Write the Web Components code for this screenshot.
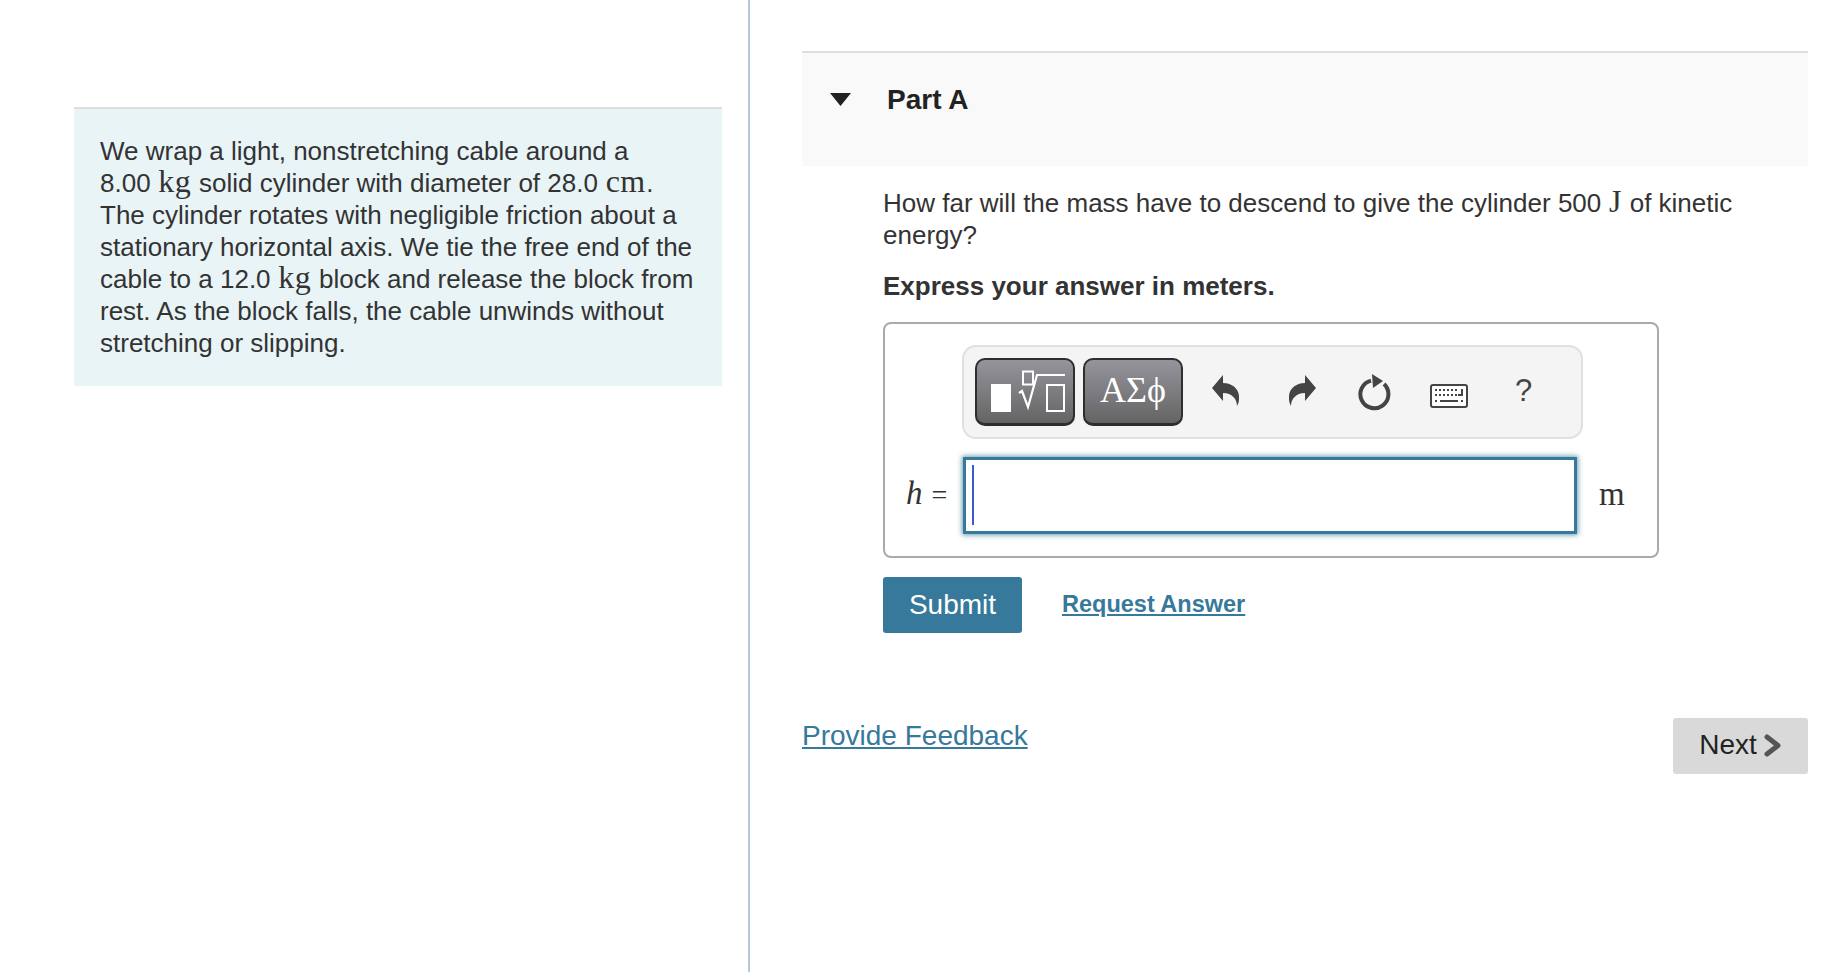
<!DOCTYPE html>
<html lang="en">
<head>
<meta charset="utf-8">
<title>Part A</title>
<style>
  html, body {
    margin: 0;
    height: 100%;
    background: #fff;
    color: #333;
    font-family: "Liberation Sans", Arial, sans-serif;
    font-size: 26px;
    line-height: 32px;
  }
</style>
</head>
<body>
<item-layout>
  <prompt-panel slot="left">
    We wrap a light, nonstretching cable around a<br>
    8.00 <math-text>kg</math-text> solid cylinder with diameter of 28.0 <math-text>cm</math-text>.<br>
    The cylinder rotates with negligible friction about a stationary horizontal axis. We tie the free end of the cable to a 12.0 <math-text>kg</math-text> block and release the block from rest. As the block falls, the cable unwinds without stretching or slipping.
  </prompt-panel>
  <part-header>Part A</part-header>
  <part-body>
    <p>How far will the mass have to descend to give the cylinder 500 <math-text>J</math-text> of kinetic energy?</p>
    <p class="hint"><b>Express your answer in meters.</b></p>
    <answer-box label="h" unit="m"></answer-box>
    <submit-row></submit-row>
  </part-body>
  <item-footer></item-footer>
</item-layout>

<script>
/**
 * Shorthand for a custom element whose shadow root is only a template string.
 *
 * @param {string} name - The tag name.
 * @param {string} html - Markup and styles for the shadow root.
 */
const simpleElement = (name, html) => {
  const template = document.createElement('template')
  template.innerHTML = html
  customElements.define(name, class extends HTMLElement {
    constructor () {
      super()
      this.attachShadow({ mode: 'open' })
        .appendChild(template.content.cloneNode(true))
    }
  })
}

simpleElement('item-layout', `
  <style>
    :host {
      display: grid;
      grid-template-columns: 750px 1fr;
      min-height: 100vh;
    }
    #left {
      border-right: 2px solid #b3c7dc;
      padding: 107px 26px 0 74px;
      box-sizing: border-box;
    }
    #right {
      padding: 51px 30px 0 52px;
      min-width: 0;
    }
  </style>
  <div id="left"><slot name="left"></slot></div>
  <div id="right"><slot></slot></div>
`)

simpleElement('prompt-panel', `
  <style>
    :host {
      display: block;
      background: #e9f4f7;
      border-top: 2px solid #dedede;
      padding: 26px 22px 27px 26px;
    }
  </style>
  <slot></slot>
`)

// no whitespace around the slot here, it would show up as a space after the unit
simpleElement('math-text', '<style>:host { display: inline; margin: 0 .5px; font-family: "Liberation Serif", "Times New Roman", serif; font-size: 32px; letter-spacing: .5px; line-height: 0; }</style><slot></slot>')

simpleElement('part-header', `
  <style>
    :host {
      display: flex;
      align-items: center;
      box-sizing: border-box;
      height: 115px;
      padding-bottom: 19px;
      background: #f9f9f9;
      border-top: 2px solid #dedede;
      color: #222;
      font-size: 28px;
      font-weight: bold;
    }
    svg {
      margin-left: 28px;
      margin-right: 36px;
      margin-top: -2px;
    }
  </style>
  <svg width="21" height="13" viewBox="0 0 21 13"><path d="M0 0H21L10.5 13Z" fill="#222"/></svg>
  <slot></slot>
`)

simpleElement('part-body', `
  <style>
    :host {
      display: block;
      padding: 21px 0 0 81px;
    }
    ::slotted(p) {
      margin: 0 60px 19px 0;
    }
    ::slotted(.hint) {
      margin-bottom: 20px;
    }
  </style>
  <slot></slot>
`)

simpleElement('math-toolbar', `
  <style>
    :host {
      display: flex;
      align-items: center;
      box-sizing: border-box;
      width: 621px;
      height: 94px;
      margin-left: 77px;
      padding: 0 0 0 11px;
      background: #f4f4f4;
      border: 2px solid #e0e0e0;
      border-radius: 14px;
    }
    .tmpl {
      display: flex;
      align-items: center;
      justify-content: center;
      box-sizing: border-box;
      width: 100px;
      height: 68px;
      margin-top: -1px;
      border: 2px solid #2e2e2e;
      border-bottom-width: 3px;
      border-radius: 10px;
      background: linear-gradient(#96949c, #646464);
      color: #fff;
      font-family: "Liberation Serif", serif;
      font-size: 36px;
      line-height: 1;
    }
    .tmpl + .tmpl { margin-left: 8px; padding-bottom: 3px; }
    .tool { display: block; flex: none; }
    .help {
      color: #444;
      font-size: 31px;
      line-height: 36px;
      margin-left: 47px;
      margin-top: -2px;
    }
  </style>
  <div class="tmpl">
    <svg width="96" height="63" viewBox="2 2 96 63" fill="none" stroke="#fff" stroke-width="2">
      <rect x="16" y="26" width="20" height="28" fill="#fff" stroke="none"/>
      <rect x="48" y="13.5" width="10" height="13"/>
      <path d="M44 35 47 33 53 49 62 17H90" stroke-width="2.2"/>
      <rect x="72" y="27" width="17" height="26"/>
    </svg>
  </div>
  <div class="tmpl">ΑΣϕ</div>
  <svg class="tool" style="margin-left:29px;margin-top:-4px" width="27" height="31" viewBox="0 0 27 31">
    <path d="M0 13 11 0V8C20 8 28 14 27 24 27 27 26 29 25 31 25 24 20 18 11 18V26Z" fill="#444"/>
  </svg>
  <svg class="tool" style="margin-left:50px;margin-top:-4px" width="27" height="31" viewBox="0 0 27 31">
    <path d="M27 13 16 0V8C7 8-1 14 0 24 0 27 1 29 2 31 2 24 7 18 16 18V26Z" fill="#444"/>
  </svg>
  <svg class="tool" style="margin-left:42px" width="33" height="37" viewBox="0 0 33 37">
    <path d="M13 6.6A14 14 0 1 0 26 10" fill="none" stroke="#444" stroke-width="4"/>
    <path d="M14 0 25 7 15 14Z" fill="#444"/>
  </svg>
  <svg class="tool" style="margin-left:39px;margin-top:8px" width="38" height="24" viewBox="0 0 38 24" fill="#444">
    <rect x="1" y="1" width="36" height="22" rx="2" fill="#fff" stroke="#444" stroke-width="2"/>
    <path d="M5 5h2v2H5zM9 5h2v2H9zM13 5h2v2h-2zM17 5h2v2h-2zM21 5h2v2h-2zM25 5h2v2h-2zM31 5h2v7h-5v-2h3zM5 10h2v2H5zM9 10h2v2H9zM13 10h2v2h-2zM17 10h2v2h-2zM21 10h2v2h-2zM25 10h2v2h-2zM5 16h2v2H5zM10 16h18v2H10zM31 16h2v2h-2z"/>
  </svg>
  <span class="help">?</span>
`)

customElements.define('answer-box',
  /**
   * Bordered box with the math toolbar, the label, the input and the unit.
   */
  class extends HTMLElement {
    /**
     * Builds the shadow root from the label and unit attributes.
     */
    constructor () {
      super()
      this.attachShadow({ mode: 'open' }).innerHTML = `
        <style>
          :host {
            display: block;
            box-sizing: border-box;
            width: 776px;
            height: 236px;
            padding: 21px 0 0 0;
            border: 2px solid #aaa;
            border-radius: 8px;
          }
          #row {
            display: flex;
            align-items: center;
            margin-top: 18px;
          }
          #label {
            width: 78px;
            box-sizing: border-box;
            padding: 0 0 4px 21px;
            font-family: "Liberation Serif", serif;
            font-size: 33px;
            white-space: nowrap;
          }
          #label span { font-size: 28px; margin-left: 2px; }
          #input {
            box-sizing: border-box;
            width: 614px;
            height: 77px;
            padding: 4px 0 0 6px;
            border: 3px solid #37799b;
            box-shadow: 0 0 5px 1px rgba(55, 121, 155, .75);
            background: #fff;
          }
          #caret { width: 2px; height: 60px; margin-top: 1px; background: #3a5bcf; }
          #unit {
            margin-left: 22px;
            padding-bottom: 4px;
            font-family: "Liberation Serif", serif;
            font-size: 33px;
          }
        </style>
        <math-toolbar></math-toolbar>
        <div id="row">
          <div id="label"><i>${this.getAttribute('label')}</i><span> =</span></div>
          <div id="input"><div id="caret"></div></div>
          <div id="unit">${this.getAttribute('unit')}</div>
        </div>
      `
    }
  })

simpleElement('submit-row', `
  <style>
    :host {
      display: flex;
      align-items: center;
      margin-top: 19px;
    }
    #submit {
      width: 139px;
      height: 56px;
      border: none;
      border-radius: 3px;
      background: #37799b;
      color: #fff;
      font: 28px "Liberation Sans", Arial, sans-serif;
      padding: 0;
    }
    a {
      margin-left: 40px;
      margin-bottom: 2px;
      color: #37799b;
      font-size: 23.5px;
      font-weight: bold;
      text-decoration: underline;
    }
  </style>
  <button id="submit">Submit</button>
  <a href="#">Request Answer</a>
`)

simpleElement('item-footer', `
  <style>
    :host {
      display: flex;
      justify-content: space-between;
      align-items: flex-start;
      margin-top: 85px;
    }
    a {
      margin-top: 2px;
      color: #37799b;
      font-size: 28px;
      text-decoration: underline;
    }
    #next {
      display: flex;
      align-items: center;
      justify-content: center;
      gap: 7px;
      width: 135px;
      height: 56px;
      padding: 0 0 2px;
      border: none;
      border-radius: 3px;
      background: #d9d9d9;
      color: #222;
      font: 28px "Liberation Sans", Arial, sans-serif;
    }
  </style>
  <a href="#">Provide Feedback</a>
  <button id="next">Next
    <svg width="18" height="23" viewBox="0 0 18 23"><path d="M3 3 14 11.5 3 20" fill="none" stroke="#555" stroke-width="5" stroke-linecap="round" stroke-linejoin="round"/></svg>
  </button>
`)
</script>
</body>
</html>
